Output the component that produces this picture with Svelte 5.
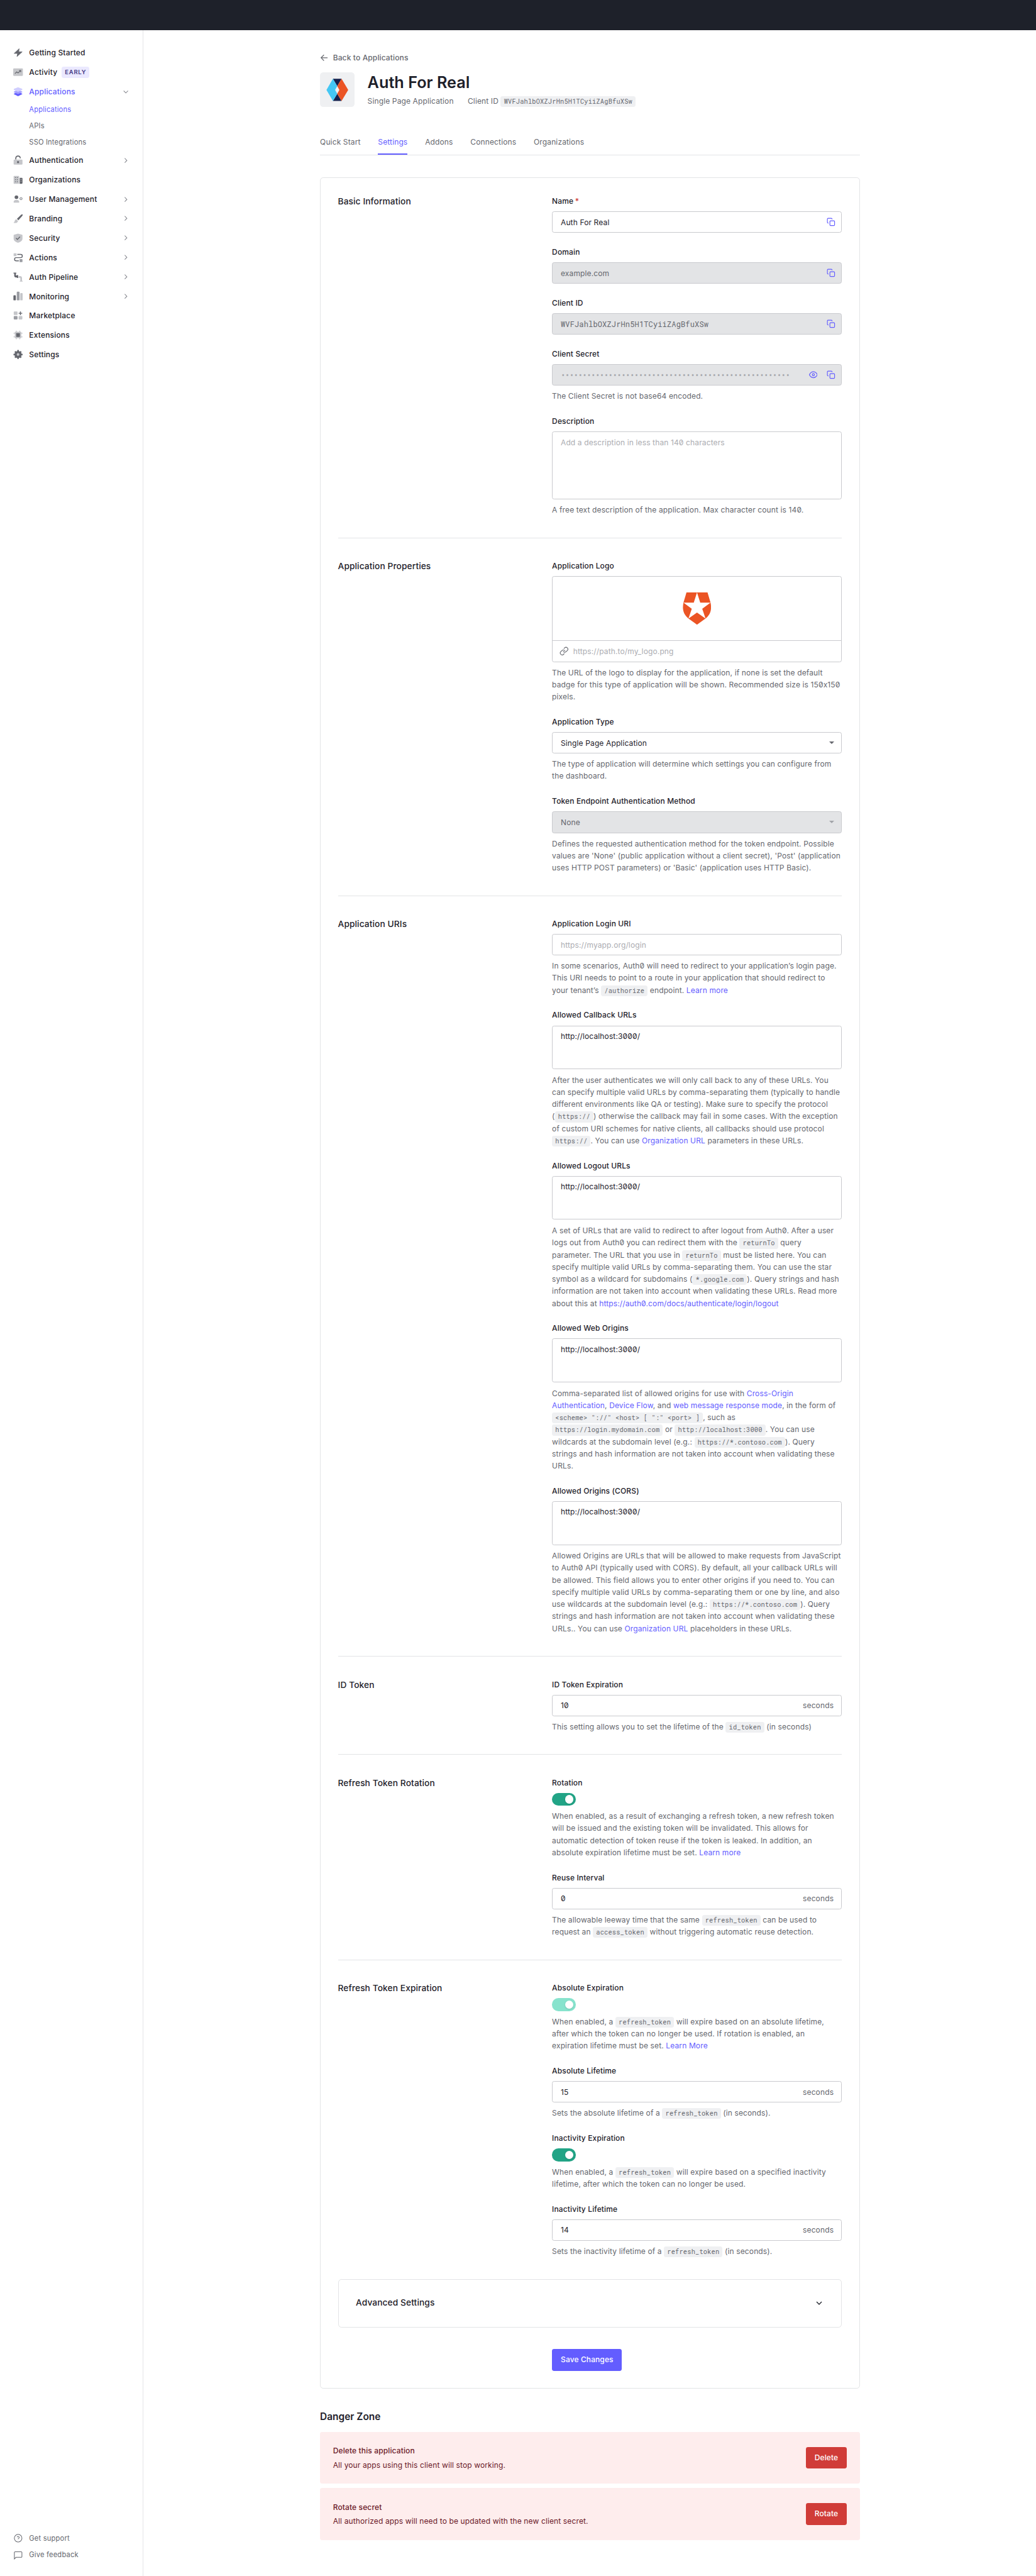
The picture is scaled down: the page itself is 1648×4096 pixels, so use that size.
<script>
  const before = [
    { label: 'Getting Started', icon: 'bolt' },
    { label: 'Activity', icon: 'activity', badge: 'EARLY' },
    { label: 'Applications', icon: 'layers', active: true, chevron: 'down' }
  ];
  const sub = [
    { label: 'Applications', active: true },
    { label: 'APIs' },
    { label: 'SSO Integrations' }
  ];
  const after = [
    { label: 'Authentication', icon: 'lock', chevron: 'right' },
    { label: 'Organizations', icon: 'building' },
    { label: 'User Management', icon: 'user', chevron: 'right' },
    { label: 'Branding', icon: 'brush', chevron: 'right' },
    { label: 'Security', icon: 'shield', chevron: 'right' },
    { label: 'Actions', icon: 'flow', chevron: 'right' },
    { label: 'Auth Pipeline', icon: 'pipe', chevron: 'right' },
    { label: 'Monitoring', icon: 'bars', chevron: 'right' },
    { label: 'Marketplace', icon: 'market' },
    { label: 'Extensions', icon: 'chip' },
    { label: 'Settings', icon: 'gear' }
  ];
  const tabs = ['Quick Start', 'Settings', 'Addons', 'Connections', 'Organizations'];
  const clientId = 'WVFJahlbOXZJrHn5H1TCyiiZAgBfuXSw';
  const secret = '•'.repeat(53);
</script>

{#snippet navIcon(name)}
  <svg class="nav-icon" viewBox="0 0 18 18" fill="none">
    {#if name === 'bolt'}
      <path class="d ds" stroke-width="1" stroke-linejoin="round" d="M11 1.7 1.8 10.4h6.4L7 16.3l9.6-8.8h-6.4z" />
    {:else if name === 'activity'}
      <rect class="l" x="0" y="2" width="18" height="14" rx="1.6" />
      <path class="ds" stroke-width="1.4" d="m3.2 11.8 3.3-3.3 2.6 2 4.4-4.2M11 5.9h3v3" />
    {:else if name === 'layers'}
      <path class="p1" d="M9 9.4 1.2 12.8v1L9 17.4l7.8-3.6v-1z" />
      <path class="p2" d="M9 5.6 1.2 8.9v1.2L9 13.5l7.8-3.4V8.9z" />
      <path class="p3" d="m9 1 7.8 2.8v2L9 9.2 1.2 5.8v-2z" />
    {:else if name === 'lock'}
      <rect class="l" x=".8" y="7.8" width="16.4" height="9.4" rx="1.6" />
      <path class="ds" stroke-width="1.9" d="M4.800 7.600V5.500a4.200 4.200 0 0 1 8.200-1.300l.5 1.100" />
      <circle class="d" cx="9" cy="12.5" r="2" />
    {:else if name === 'building'}
      <path class="l" d="M2 2h8a1 1 0 0 1 1 1v13.500H1.800a1 1 0 0 1-1-1V3a1 1 0 0 1 1-1z" />
      <path class="d" d="M12 5.500h4a1.200 1.200 0 0 1 1.200 1.200v8.600a1.200 1.200 0 0 1-1.200 1.200h-4z" />
      <path class="ds" stroke-width="1.5" stroke-dasharray="1.5 2" d="M3.400 5.200h5.500M3.400 8.900h5.500M3.400 12.600h5.500" />
      <path class="ls" stroke-width="1.2" stroke-dasharray="1.3 2" d="M14.600 8v6" />
    {:else if name === 'user'}
      <circle class="d" cx="6" cy="5.3" r="3.4" />
      <path class="l" d="M.800 14.200c0-2.300 1.600-3.800 3.700-3.800h3c2.100 0 3.700 1.500 3.700 3.800 0 .7-.4 1.200-1.100 1.200H1.900c-.7 0-1.100-.5-1.100-1.200z" />
      <circle class="ms" cx="14.5" cy="8" r="1.9" stroke-width="1.5" />
      <path class="ms" stroke-width="1" d="M11.300 8h1.200m4 0h1.200" />
    {:else if name === 'brush'}
      <path class="d" d="m17.200.9.4.5-.5 2L9.700 12 6.900 9.300 14.900 1.500z" />
      <path class="l" d="M5.900 10.200 8.800 13c-.3 2.500-2.200 4-4.600 4H1.200L.700 16.300c1.200-.5 1.600-1.300 2-2.900.5-1.800 1.500-3 3.200-3.200z" />
    {:else if name === 'shield'}
      <path class="l" d="m9 .7 7.500 2c.4.1.7.5.7 1V10c0 3.800-3.800 6.200-8.200 7.500C4.600 16.200.8 13.800.8 10V3.700c0-.5.300-.9.700-1z" />
      <path class="ds" stroke-width="1.7" d="m5.200 8.800 2.600 2.600 4.800-5" />
    {:else if name === 'flow'}
      <rect class="l" x=".8" y=".8" width="5.4" height="5.4" rx="1" />
      <rect class="m" x="11.8" y="11.8" width="5.4" height="5.4" rx="1" />
      <path class="ds" stroke-width="1.7" d="M7.600 2.900h6.300a2.900 2.900 0 0 1 0 6H5.500a2.900 2.900 0 0 0 0 5.900h5" />
    {:else if name === 'pipe'}
      <path class="d" d="M.6.600H5.700V2.200H5v3.700h1.500V5.200h2.800v5.400H7.200V9.500H5.400C3.300 9.500 1.900 8.500 1.900 6.400V2.200H.6z" />
      <path class="l" d="M10.200 7h2.600c2.200 0 3.500 1.400 3.500 3.600v5.200h1.200v1.500h-5.300v-1.500h1v-4.600c0-.6-.3-.9-.9-.9h-2.100z" />
    {:else if name === 'bars'}
      <rect class="d" x=".4" y="7.6" width="4.5" height="9.4" rx="1.4" />
      <rect class="m" x="6.6" y="1" width="5.2" height="16" rx="1.4" />
      <rect class="l" x="13" y="3.4" width="4.5" height="13.6" rx="1.4" />
    {:else if name === 'market'}
      <rect class="l" x="1" y="1.6" width="7" height="6.4" rx="1.4" />
      <rect class="m" x="1" y="10" width="7" height="6.4" rx="1.4" />
      <rect class="l" x="10" y="10" width="7" height="6.4" rx="1.4" />
      <path class="ds" stroke-width="1.7" d="M13.400 1.500v6.600M10.100 4.800h6.700" />
    {:else if name === 'chip'}
      <path class="ls" stroke-width="1.4" d="M5.800 1v16M12.200 1v16M.600 5.600h16.800M.600 12.400h16.800" />
      <rect class="l" x="3" y="3" width="12" height="12" rx="1.5" />
      <rect class="d" x="5.6" y="5.6" width="6.8" height="6.8" rx=".5" />
    {:else if name === 'gear'}
      <circle class="d" cx="9" cy="9" r="6.6" />
      <path class="ds" stroke-width="3" d="M9 .7v16.600M.600 9h16.800M3.300 3.300l11.400 11.400M14.700 3.300 3.300 14.700" />
      <circle class="l" cx="9" cy="9" r="2.5" />
    {/if}
  </svg>
{/snippet}

{#snippet navItem(item)}
  <a class="nav-item" class:active={item.active}>
    {@render navIcon(item.icon)}
    <span>{item.label}</span>
    {#if item.badge}<span class="badge">{item.badge}</span>{/if}
    {#if item.chevron}
      <svg class="chev" viewBox="0 0 12 12" fill="none">
        <path d={item.chevron === 'down' ? 'm2 4 4 4 4-4' : 'm4 2 4 4-4 4'} />
      </svg>
    {/if}
  </a>
{/snippet}

{#snippet copyIcon()}
  <svg class="act" viewBox="0 0 24 24" fill="none">
    <rect x="9" y="9" width="13" height="13" rx="2" />
    <path d="M5 15H4a2 2 0 0 1-2-2V4a2 2 0 0 1 2-2h9a2 2 0 0 1 2 2v1" />
  </svg>
{/snippet}

{#snippet seconds(value)}
  <div class="input"><span class="val">{value}</span><span class="unit">seconds</span></div>
{/snippet}

{#snippet localUrls()}
  <div class="area short">http://localhost:3000/</div>
{/snippet}

{#snippet token()}<code>refresh_token</code>{/snippet}

<div class="page">
  <header class="topbar"></header>
  <div class="body">
    <nav class="side">
      <div class="nav">
        {#each before as item}{@render navItem(item)}{/each}
        <div class="subnav">
          {#each sub as s}<a class:active={s.active}>{s.label}</a>{/each}
        </div>
        {#each after as item}{@render navItem(item)}{/each}
      </div>
      <div class="foot">
        <a>
          <svg viewBox="0 0 24 24" fill="none"><circle cx="12" cy="12" r="10.6" /><path d="M9 9.200a3.100 3.100 0 0 1 6 1c0 2-3 2.600-3 4M12 17v.6" /></svg>
          Get support
        </a>
        <a>
          <svg viewBox="0 0 24 24" fill="none"><path d="M22.500 16a2 2 0 0 1-2 2H6l-4.500 4.500v-18a2 2 0 0 1 2-2h17a2 2 0 0 1 2 2z" /></svg>
          Give feedback
        </a>
      </div>
    </nav>

    <main>
      <a class="back">
        <svg viewBox="0 0 16 16" fill="none"><path d="M14 8H2.200M7.400 2.600 2 8l5.400 5.400" /></svg>
        Back to Applications
      </a>

      <div class="head">
        <div class="app-logo">
          <svg viewBox="0 0 64 64">
            <path fill="#16214d" d="M24 12h16l-8 13.500zM24 53h16l-8-13.500z" />
            <path fill="#44c7f4" d="m24 12 8 13.500-4 7 4 7L24 53 12 32.500z" />
            <path fill="#eb5424" d="m40 12-8 13.500 4 7-4 7L40 53l12.300-20.500z" />
          </svg>
        </div>
        <div class="head-text">
          <h1>Auth For Real</h1>
          <div class="meta">
            <span>Single Page Application</span>
            <span class="cid">Client ID <code>{clientId}</code></span>
          </div>
        </div>
      </div>

      <div class="tabs">
        {#each tabs as t}<a class:active={t === 'Settings'}>{t}</a>{/each}
      </div>

      <div class="card">
        <section>
          <h2>Basic Information</h2>
          <div class="fields">
            <div class="field">
              <label>Name<em>*</em></label>
              <div class="input"><span class="val">Auth For Real</span>{@render copyIcon()}</div>
            </div>
            <div class="field">
              <label>Domain</label>
              <div class="input off"><span class="val">example.com</span>{@render copyIcon()}</div>
            </div>
            <div class="field">
              <label>Client ID</label>
              <div class="input off"><span class="val mono">{clientId}</span>{@render copyIcon()}</div>
            </div>
            <div class="field">
              <label>Client Secret</label>
              <div class="input off">
                <span class="val mono dots">{secret}</span>
                <svg class="act" viewBox="0 0 24 24" fill="none">
                  <path d="M.800 12S5 3.800 12 3.800 23.200 12 23.200 12 19 20.200 12 20.200.800 12 .800 12z" /><circle cx="12" cy="12" r="3" />
                </svg>
                {@render copyIcon()}
              </div>
              <p>The Client Secret is not base64 encoded.</p>
            </div>
            <div class="field">
              <label>Description</label>
              <div class="area tall">Add a description in less than 140 characters</div>
              <p>A free text description of the application. Max character count is 140.</p>
            </div>
          </div>
        </section>

        <section>
          <h2>Application Properties</h2>
          <div class="fields">
            <div class="field">
              <label>Application Logo</label>
              <div class="logo-box">
                <div class="preview">
                  <svg viewBox="0 0 53 60">
                    <path fill="#eb5424" d="M7 0h39l5.500 18.500C54.500 32 51 41.500 42.300 48.300L26.500 59.800 10.700 48.300C2 41.500-1.500 32 1.500 18.500z" />
                    <path fill="#fff" d="m26.500 0 6 19h19L36.200 30.200l6.100 18.100-15.800-11.100-15.800 11.100 6.100-18.100L1.500 19h19z" />
                  </svg>
                </div>
                <div class="url">
                  <svg viewBox="0 0 24 24" fill="none">
                    <path d="M10 13a5 5 0 0 0 7.540.540l3-3a5 5 0 0 0-7.070-7.070l-1.720 1.710" />
                    <path d="M14 11a5 5 0 0 0-7.540-.540l-3 3a5 5 0 0 0 7.070 7.070l1.710-1.710" />
                  </svg>
                  https://path.to/my_logo.png
                </div>
              </div>
              <p>The URL of the logo to display for the application, if none is set the default<br />badge for this type of application will be shown. Recommended size is 150x150<br />pixels.</p>
            </div>
            <div class="field">
              <label>Application Type</label>
              <div class="input"><span class="val">Single Page Application</span><i class="caret"></i></div>
              <p>The type of application will determine which settings you can configure from<br />the dashboard.</p>
            </div>
            <div class="field">
              <label>Token Endpoint Authentication Method</label>
              <div class="input off"><span class="val">None</span><i class="caret"></i></div>
              <p>Defines the requested authentication method for the token endpoint. Possible<br />values are 'None' (public application without a client secret), 'Post' (application<br />uses HTTP POST parameters) or 'Basic' (application uses HTTP Basic).</p>
            </div>
          </div>
        </section>

        <section>
          <h2>Application URIs</h2>
          <div class="fields">
            <div class="field">
              <label>Application Login URI</label>
              <div class="input"><span class="val ph">https://myapp.org/login</span></div>
              <p>In some scenarios, Auth0 will need to redirect to your application’s login page.<br />This URI needs to point to a route in your application that should redirect to<br />your tenant’s <code>/authorize</code> endpoint. <a>Learn more</a></p>
            </div>
            <div class="field">
              <label>Allowed Callback URLs</label>
              {@render localUrls()}
              <p>After the user authenticates we will only call back to any of these URLs. You<br />can specify multiple valid URLs by comma-separating them (typically to handle<br />different environments like QA or testing). Make sure to specify the protocol<br />(<code>https://</code>) otherwise the callback may fail in some cases. With the exception<br />of custom URI schemes for native clients, all callbacks should use protocol<br /><code>https://</code>. You can use <a>Organization URL</a> parameters in these URLs.</p>
            </div>
            <div class="field">
              <label>Allowed Logout URLs</label>
              {@render localUrls()}
              <p>A set of URLs that are valid to redirect to after logout from Auth0. After a user<br />logs out from Auth0 you can redirect them with the <code>returnTo</code> query<br />parameter. The URL that you use in <code>returnTo</code> must be listed here. You can<br />specify multiple valid URLs by comma-separating them. You can use the star<br />symbol as a wildcard for subdomains (<code>*.google.com</code>). Query strings and hash<br />information are not taken into account when validating these URLs. Read more<br />about this at <a>https://auth0.com/docs/authenticate/login/logout</a></p>
            </div>
            <div class="field">
              <label>Allowed Web Origins</label>
              {@render localUrls()}
              <p>Comma-separated list of allowed origins for use with <a>Cross-Origin<br />Authentication</a>, <a>Device Flow</a>, and <a>web message response mode</a>, in the form of<br /><code>{'<scheme> "://" <host> [ ":" <port> ]'}</code>, such as<br /><code>https://login.mydomain.com</code> or <code>http://localhost:3000</code>. You can use<br />wildcards at the subdomain level (e.g.: <code>https://*.contoso.com</code>). Query<br />strings and hash information are not taken into account when validating these<br />URLs.</p>
            </div>
            <div class="field">
              <label>Allowed Origins (CORS)</label>
              {@render localUrls()}
              <p>Allowed Origins are URLs that will be allowed to make requests from JavaScript<br />to Auth0 API (typically used with CORS). By default, all your callback URLs will<br />be allowed. This field allows you to enter other origins if you need to. You can<br />specify multiple valid URLs by comma-separating them or one by line, and also<br />use wildcards at the subdomain level (e.g.: <code>https://*.contoso.com</code>). Query<br />strings and hash information are not taken into account when validating these<br />URLs.. You can use <a>Organization URL</a> placeholders in these URLs.</p>
            </div>
          </div>
        </section>

        <section>
          <h2>ID Token</h2>
          <div class="fields">
            <div class="field">
              <label>ID Token Expiration</label>
              {@render seconds('10')}
              <p>This setting allows you to set the lifetime of the <code>id_token</code> (in seconds)</p>
            </div>
          </div>
        </section>

        <section>
          <h2>Refresh Token Rotation</h2>
          <div class="fields">
            <div class="field">
              <label>Rotation</label>
              <div class="toggle"><i></i></div>
              <p>When enabled, as a result of exchanging a refresh token, a new refresh token<br />will be issued and the existing token will be invalidated. This allows for<br />automatic detection of token reuse if the token is leaked. In addition, an<br />absolute expiration lifetime must be set. <a>Learn more</a></p>
            </div>
            <div class="field">
              <label>Reuse Interval</label>
              {@render seconds('0')}
              <p>The allowable leeway time that the same {@render token()} can be used to<br />request an <code>access_token</code> without triggering automatic reuse detection.</p>
            </div>
          </div>
        </section>

        <section>
          <h2>Refresh Token Expiration</h2>
          <div class="fields">
            <div class="field">
              <label>Absolute Expiration</label>
              <div class="toggle dim"><i></i></div>
              <p>When enabled, a {@render token()} will expire based on an absolute lifetime,<br />after which the token can no longer be used. If rotation is enabled, an<br />expiration lifetime must be set. <a>Learn More</a></p>
            </div>
            <div class="field">
              <label>Absolute Lifetime</label>
              {@render seconds('15')}
              <p>Sets the absolute lifetime of a {@render token()} (in seconds).</p>
            </div>
            <div class="field">
              <label>Inactivity Expiration</label>
              <div class="toggle"><i></i></div>
              <p>When enabled, a {@render token()} will expire based on a specified inactivity<br />lifetime, after which the token can no longer be used.</p>
            </div>
            <div class="field">
              <label>Inactivity Lifetime</label>
              {@render seconds('14')}
              <p>Sets the inactivity lifetime of a {@render token()} (in seconds).</p>
            </div>
          </div>
        </section>

        <div class="advanced">
          <h2>Advanced Settings</h2>
          <svg viewBox="0 0 12 12" fill="none"><path d="m2 4 4 4 4-4" /></svg>
        </div>
        <div class="save"><button>Save Changes</button></div>
      </div>

      <h3>Danger Zone</h3>
      <div class="danger">
        <div><strong>Delete this application</strong><span>All your apps using this client will stop working.</span></div>
        <button>Delete</button>
      </div>
      <div class="danger">
        <div><strong>Rotate secret</strong><span>All authorized apps will need to be updated with the new client secret.</span></div>
        <button>Rotate</button>
      </div>
    </main>
  </div>
</div>

<style>
  :global(body) { margin: 0; background: #fff; }
  .page {
    zoom: 0.8585;
    width: 1919.6px;
    height: 4771px;
    overflow: hidden;
    display: flex;
    flex-direction: column;
    background: #fff;
    color: #1e212a;
    font: 400 14px/22.4px Inter, 'Liberation Sans', sans-serif;
    font-feature-settings: 'zero' 1;
    letter-spacing: 0.15px;
    white-space: nowrap;
  }
  h1, h2, h3, p { margin: 0; }
  * { box-sizing: border-box; }
  svg { flex: none; display: block; }

  .topbar { height: 56px; flex: none; background: #1e212a; }
  .body { flex: 1; display: flex; }

  .side {
    width: 265px;
    flex: none;
    border-right: 1px solid #e3e4e6;
    display: flex;
    flex-direction: column;
    justify-content: space-between;
    padding: 24px 25px 23px;
    font-feature-settings: normal;
  }
  .nav, .foot { display: flex; flex-direction: column; }
  .nav-item { height: 36px; display: flex; align-items: center; font-weight: 500; letter-spacing: 0.2px; }
  .nav-item.active { color: #635dff; }
  .nav-icon { width: 18px; height: 18px; margin-right: 11px; }
  .d { fill: #65676e; }
  .m { fill: #9b9da3; }
  .l { fill: #c5c6ca; }
  .ds { stroke: #65676e; }
  .ms { stroke: #9b9da3; }
  .ls { stroke: #c5c6ca; }
  .p1 { fill: #635dff; }
  .p2 { fill: #a19dff; }
  .p3 { fill: #d0ceff; }
  .badge {
    margin-left: 8px;
    height: 20px;
    padding: 0 5px 0 6px;
    border-radius: 4px;
    background: #ebe9ff;
    color: #3f3682;
    font-size: 11px;
    font-weight: 600;
    line-height: 20px;
    letter-spacing: 0.9px;
  }
  .chev { width: 12px; height: 12px; margin: 0 0 0 auto; }
  .chev path { stroke: #82848b; stroke-width: 1.2; }
  .subnav { display: flex; flex-direction: column; height: 91px; padding-left: 29px; font-size: 13px; letter-spacing: 0.18px; color: #65676e; }
  .subnav a { flex: 1; display: flex; align-items: center; }
  .subnav .active { color: #635dff; }
  .foot { font-size: 13px; letter-spacing: 0.22px; color: #65676e; }
  .foot a { height: 31px; display: flex; align-items: center; gap: 12px; }
  .foot svg { width: 16px; height: 16px; margin-left: 1px; }
  .foot path, .foot circle { stroke: #65676e; stroke-width: 1.8; }

  main { width: 1000px; margin-left: 328px; padding-top: 40px; display: flex; flex-direction: column; }
  .back { display: flex; align-items: center; gap: 8px; height: 22px; font-weight: 500; color: #65676e; }
  .back svg { width: 16px; height: 16px; }
  .back path { stroke: #65676e; stroke-width: 1.4; }

  .head { display: flex; gap: 24px; margin-top: 16px; height: 64px; }
  .app-logo { width: 64px; height: 64px; border-radius: 6px; background: #eff0f2; }
  .head-text { display: flex; flex-direction: column; }
  h1 { font-size: 29.4px; line-height: 38px; font-weight: 600; letter-spacing: 0; }
  .meta { display: flex; gap: 26px; margin-top: 4px; color: #65676e; }

  code {
    font: 400 12px/20px 'Roboto Mono', 'Liberation Mono', monospace;
    letter-spacing: 0.24px;
    display: inline-block;
    padding: 0 6px;
    border-radius: 4px;
    background: #eff0f2;
    color: #65676e;
    vertical-align: 0;
    white-space: pre;
  }
  .mono { font-family: 'Roboto Mono', 'Liberation Mono', monospace; letter-spacing: 0.17px; }
  .dots { letter-spacing: -0.38px; font-weight: 700; color: #a9abb0; }

  .tabs { display: flex; gap: 32.4px; margin-top: 41px; height: 49px; border-bottom: 1px solid #e3e4e6; color: #65676e; }
  .tabs a { height: 48px; line-height: 48px; border-bottom: 2.4px solid transparent; }
  .tabs .active { color: #635dff; border-color: #635dff; }

  .card { margin-top: 40px; padding: 32px; border: 1px solid #e3e4e6; border-radius: 6px; display: flex; flex-direction: column; }
  section { display: grid; grid-template-columns: 1fr 537px; padding-bottom: 40px; }
  section + section { border-top: 1px solid #e3e4e6; padding-top: 40px; }
  h2 { font-size: 16px; font-weight: 500; line-height: 25px; letter-spacing: 0.12px; }
  .fields { display: flex; flex-direction: column; gap: 24px; }
  .field { display: flex; flex-direction: column; gap: 8px; }
  label { font-weight: 500; }
  label em { margin-left: 3px; color: #d03c38; font-style: normal; }
  p { color: #65676e; }
  p a { color: #635dff; }
  .input {
    height: 40px;
    padding: 0 11px 0 15px;
    border: 1px solid #c9cace;
    border-radius: 4px;
    display: flex;
    align-items: center;
  }
  .off { background: #e3e4e6; color: #65676e; }
  .val { flex: 1; }
  .ph { color: #abacb1; }
  .unit { color: #65676e; padding-right: 3px; }
  .act { width: 16px; height: 16px; margin-left: 17px; }
  .act path, .act rect, .act circle { stroke: #635dff; stroke-width: 2; }
  .caret { border: 5px solid transparent; border-top: 5.5px solid #65676e; border-bottom: 0; margin-right: 2px; }
  .off .caret { border-top-color: #a2a4a9; }
  .area { border: 1px solid #c9cace; border-radius: 4px; padding: 7.5px 15px; margin-bottom: 1px; }
  .tall { height: 125px; color: #abacb1; }
  .short { height: 81px; }
  .logo-box { height: 159px; border: 1px solid #c9cace; border-radius: 4px; display: flex; flex-direction: column; }
  .preview { flex: 1; display: flex; align-items: center; justify-content: center; }
  .preview svg { width: 53px; height: 60px; }
  .url { height: 39px; border-top: 1px solid #c9cace; display: flex; align-items: center; gap: 8px; padding-left: 13px; color: #abacb1; }
  .url svg { width: 17px; height: 17px; }
  .url path { stroke: #65676e; stroke-width: 1.8; stroke-linecap: round; }
  .toggle { width: 44px; height: 24px; border-radius: 12px; background: #22a486; display: flex; align-items: center; justify-content: flex-end; padding-right: 4px; }
  .toggle i { width: 16px; height: 16px; border-radius: 50%; background: #fff; box-shadow: 0 1px 3px rgba(0, 0, 0, 0.15); }
  .dim { background: #87e3cd; }

  .advanced { height: 90px; padding: 0 32px; border: 1px solid #e3e4e6; border-radius: 6px; display: flex; align-items: center; justify-content: space-between; }
  .advanced svg { width: 14px; height: 14px; margin-right: 2px; }
  .advanced path { stroke: #1e212a; stroke-width: 1.3; }
  .save { margin-top: 40px; padding-left: 397px; display: flex; }
  button { height: 40px; border: 0; border-radius: 4px; padding: 0 16px; background: #635dff; color: #fff; font: 500 14px/40px Inter, 'Liberation Sans', sans-serif; letter-spacing: 0.12px; }

  h3 { margin-top: 38.5px; font-size: 18px; line-height: 28px; font-weight: 600; letter-spacing: 0; }
  .danger { margin-top: 14px; height: 96px; border-radius: 4px; background: #feeded; color: #6a1828; padding: 0 24px; display: flex; align-items: center; justify-content: space-between; }
  .danger + .danger { margin-top: 8px; }
  .danger div { display: flex; flex-direction: column; gap: 4px; }
  .danger strong { font-weight: 500; }
  .danger button { background: #d03c38; }
</style>
